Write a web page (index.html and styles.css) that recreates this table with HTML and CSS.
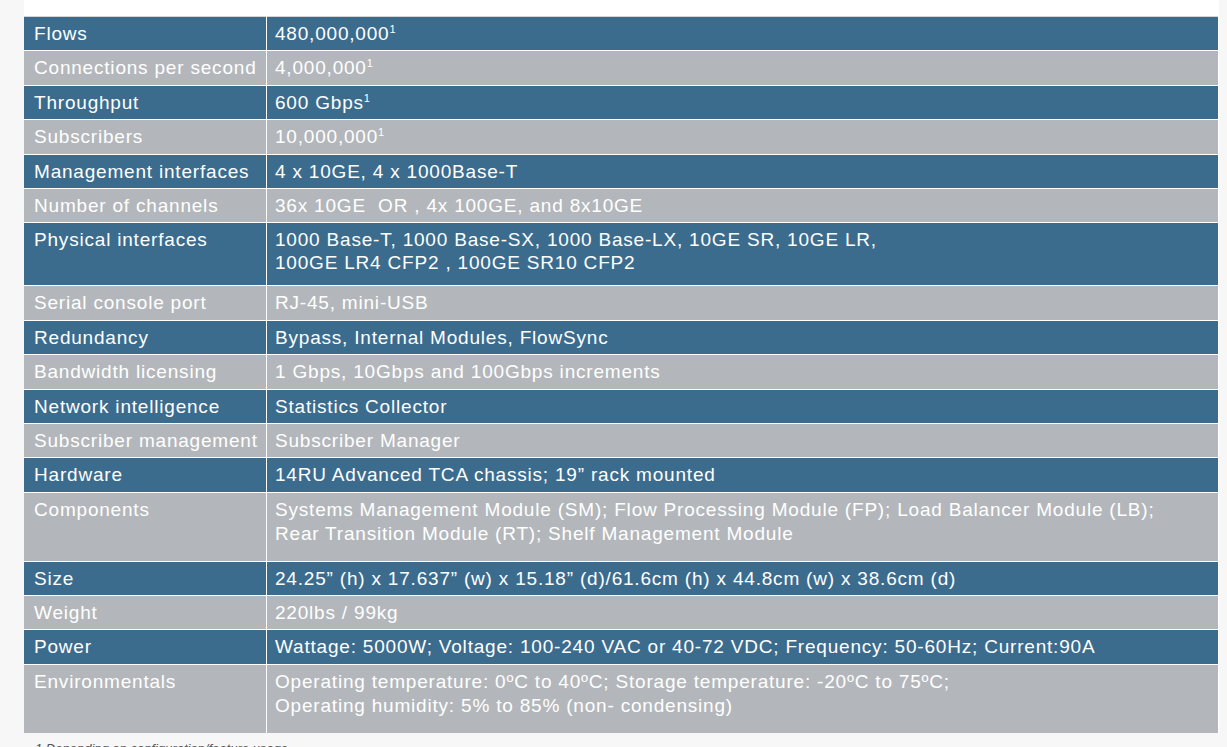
FILE: index.html
```html
<!DOCTYPE html>
<html lang="en">
<head>
<meta charset="utf-8">
<title>Specifications</title>
<link rel="stylesheet" href="styles.css">
</head>
<body>
<div class="panel">
  <table class="specs">
    <tbody>
      <tr class="blue"><td class="key">Flows</td><td class="val">480,000,000<sup>1</sup></td></tr>
      <tr class="gray"><td class="key">Connections per second</td><td class="val">4,000,000<sup>1</sup></td></tr>
      <tr class="blue"><td class="key">Throughput</td><td class="val">600 Gbps<sup>1</sup></td></tr>
      <tr class="gray"><td class="key">Subscribers</td><td class="val">10,000,000<sup>1</sup></td></tr>
      <tr class="blue"><td class="key">Management interfaces</td><td class="val">4 x 10GE, 4 x 1000Base-T</td></tr>
      <tr class="gray"><td class="key">Number of channels</td><td class="val">36x 10GE &nbsp;OR , 4x 100GE, and 8x10GE</td></tr>
      <tr class="blue two"><td class="key">Physical interfaces</td><td class="val">1000 Base-T, 1000 Base-SX, 1000 Base-LX, 10GE SR, 10GE LR,<br>100GE LR4 CFP2 , 100GE SR10 CFP2</td></tr>
      <tr class="gray"><td class="key">Serial console port</td><td class="val">RJ-45, mini-USB</td></tr>
      <tr class="blue"><td class="key">Redundancy</td><td class="val">Bypass, Internal Modules, FlowSync</td></tr>
      <tr class="gray"><td class="key">Bandwidth licensing</td><td class="val">1 Gbps, 10Gbps and 100Gbps increments</td></tr>
      <tr class="blue"><td class="key">Network intelligence</td><td class="val">Statistics Collector</td></tr>
      <tr class="gray"><td class="key">Subscriber management</td><td class="val">Subscriber Manager</td></tr>
      <tr class="blue"><td class="key">Hardware</td><td class="val">14RU Advanced TCA chassis; 19” rack mounted</td></tr>
      <tr class="gray tall"><td class="key">Components</td><td class="val">Systems Management Module (SM); Flow Processing Module (FP); Load Balancer Module (LB);<br>Rear Transition Module (RT); Shelf Management Module</td></tr>
      <tr class="blue"><td class="key">Size</td><td class="val">24.25” (h) x 17.637” (w) x 15.18” (d)/61.6cm (h) x 44.8cm (w) x 38.6cm (d)</td></tr>
      <tr class="gray"><td class="key">Weight</td><td class="val">220lbs / 99kg</td></tr>
      <tr class="blue"><td class="key">Power</td><td class="val">Wattage: 5000W; Voltage: 100-240 VAC or 40-72 VDC; Frequency: 50-60Hz; Current:90A</td></tr>
      <tr class="gray tall last"><td class="key">Environmentals</td><td class="val">Operating temperature: 0ºC to 40ºC; Storage temperature: -20ºC to 75ºC;<br>Operating humidity: 5% to 85% (non- condensing)</td></tr>
    </tbody>
  </table>
</div>
<p class="footnote">1 Depending on configuration/feature usage</p>
</body>
</html>
```

FILE: styles.css
```css
html, body {
  margin: 0;
  padding: 0;
  background: #f7f7f7;
}

body {
  font-family: "Liberation Sans", Arial, Helvetica, sans-serif;
}

.panel {
  margin-left: 24px;
  width: 1195px;
  background: #ffffff;
  padding-top: 16px;
}

.specs {
  width: 1194px;
  border-collapse: collapse;
  border-spacing: 0;
  border-top: 1px solid #d2d5d8;
  table-layout: fixed;
}

.specs td {
  color: #ffffff;
  font-size: 19px;
  letter-spacing: 0.8px;
  line-height: 23px;
  padding: 5px 9px 5.4px 10px;
  vertical-align: top;
  border-bottom: 1px solid #ffffff;
  white-space: nowrap;
}

.specs .key {
  width: 223px;
}

.specs .val {
  border-left: 1px solid #ffffff;
  padding-left: 8px;
}

.specs tr.blue td {
  background: #3b6c8e;
}

.specs tr.gray td {
  background: #b3b7bb;
}

.specs tr.two td {
  padding-bottom: 11px;
}

.specs tr.tall td {
  line-height: 24.5px;
  padding-bottom: 14px;
}

.specs tr.last td {
  border-bottom: none;
}

.specs sup {
  font-size: 11px;
  line-height: 0;
  vertical-align: 7px;
  letter-spacing: 0;
}

.footnote {
  margin: 8px 0 0 35px;
  font-size: 13px;
  font-style: italic;
  color: #555555;
}
```
